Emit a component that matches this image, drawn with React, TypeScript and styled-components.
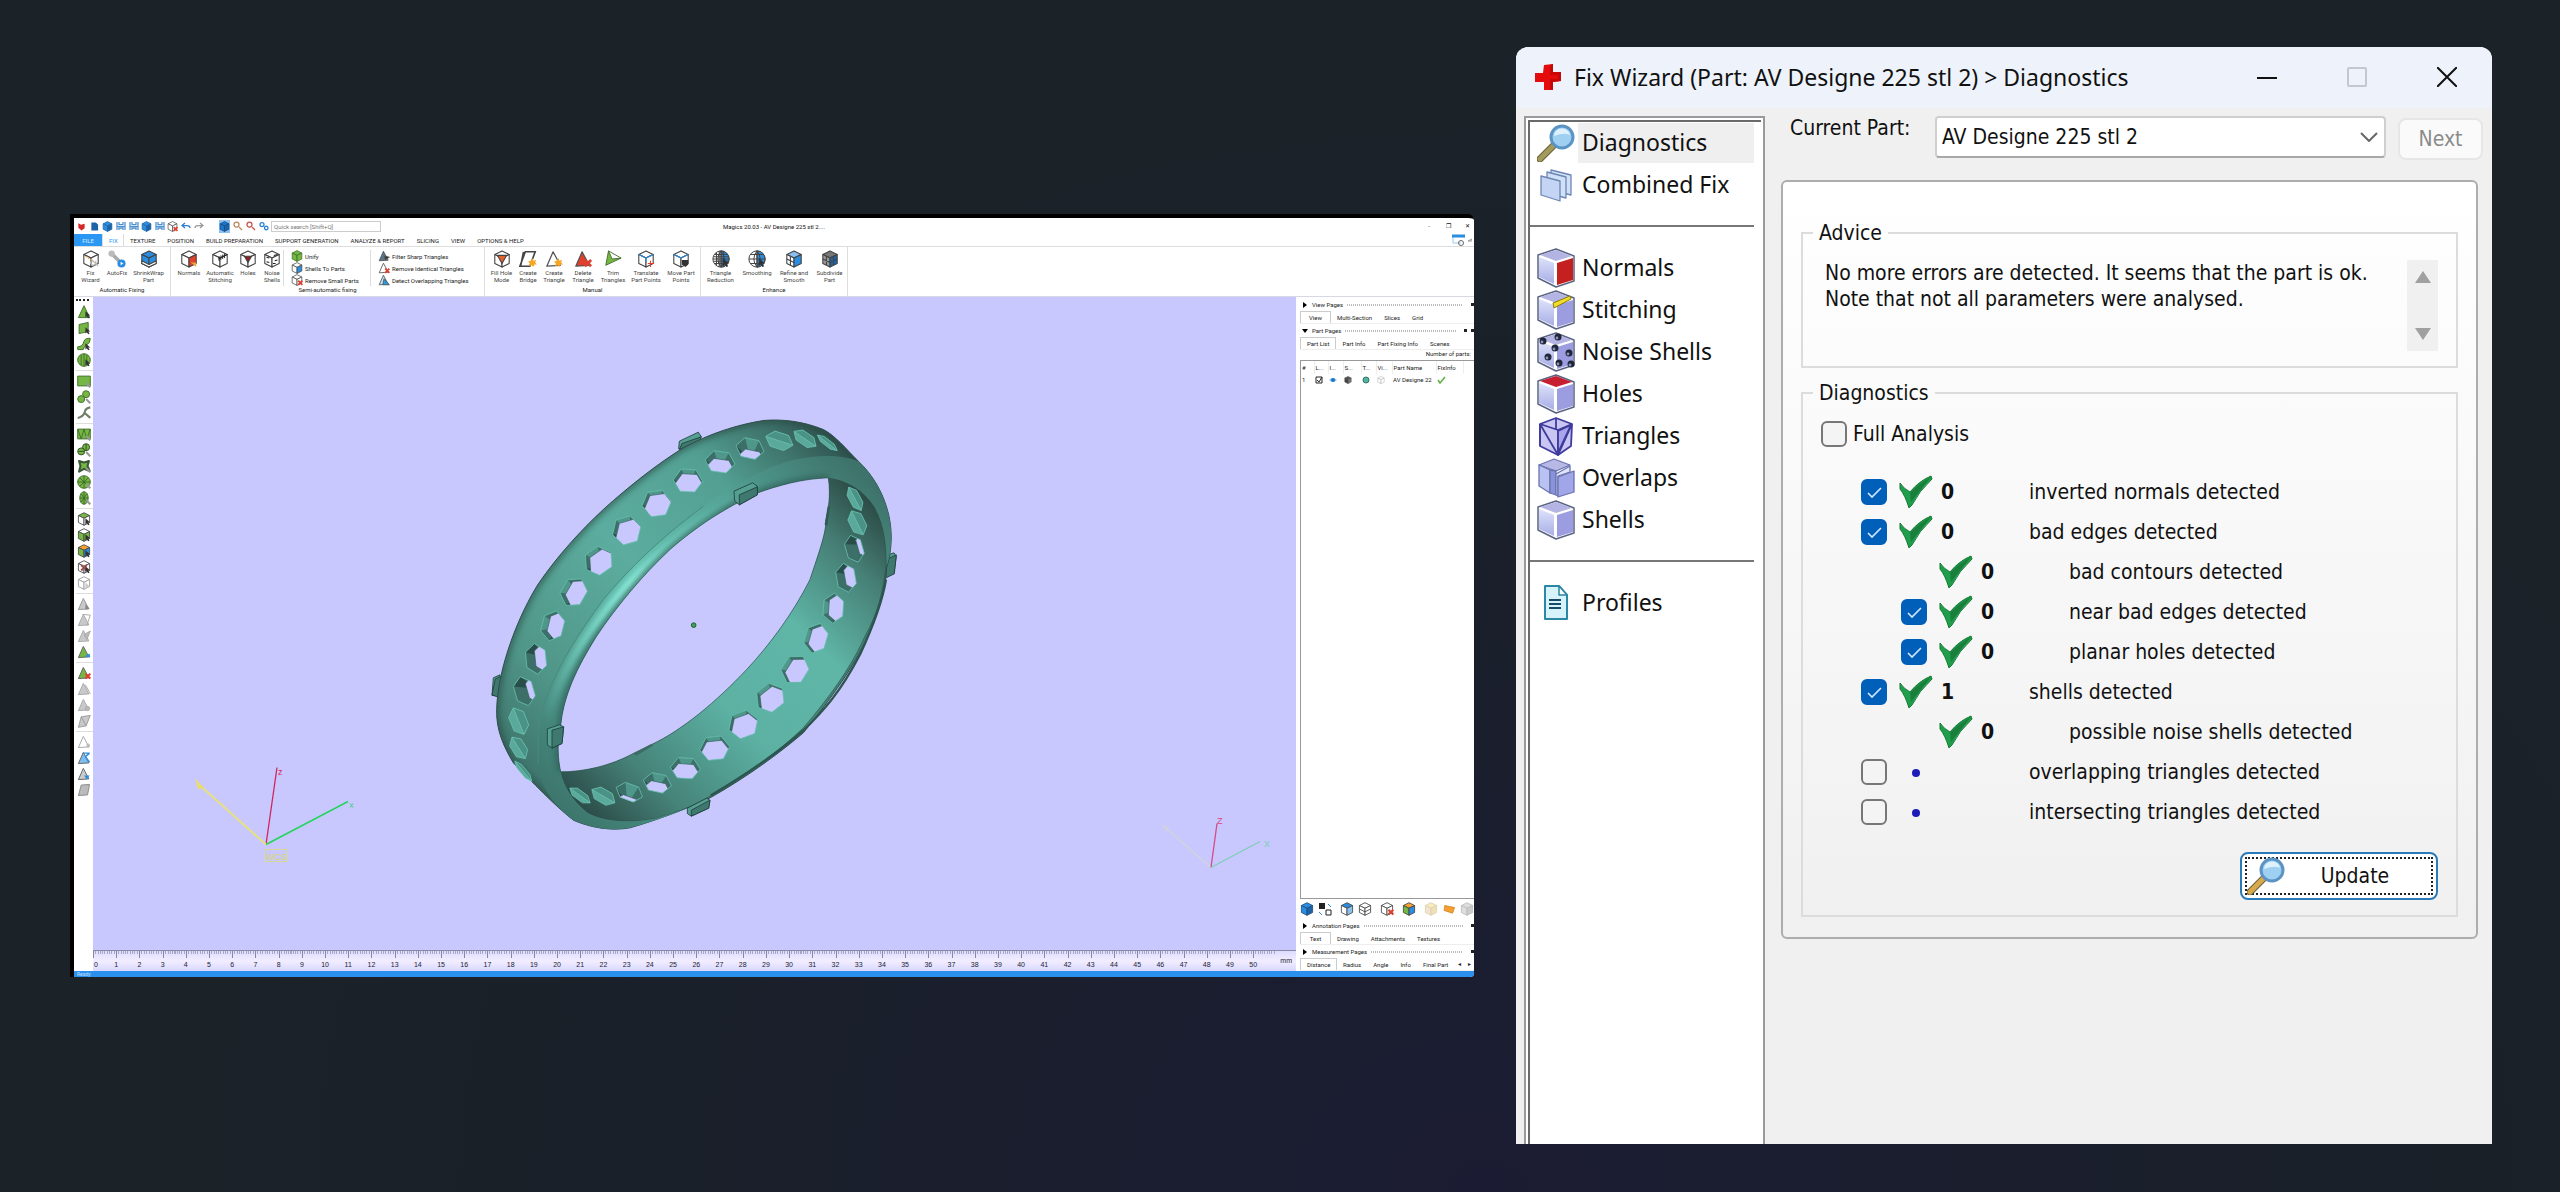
import React from "react";
import styled, { createGlobalStyle, css } from "styled-components";

const tiny = `Roboto, "Open Sans", sans-serif`;
const wizardTitle = `"Noto Sans", "Open Sans", sans-serif`;
const wizardBody = `"DejaVu Sans Condensed", "Noto Sans", sans-serif`;

const GlobalStyle = createGlobalStyle`
  * { box-sizing: border-box; }
  body { margin: 0; background: #1b2228; }
  button, input, select { font: inherit; color: inherit; margin: 0; }
  svg { display: block; flex: none; }
`;

const Page = styled.main`
  min-height: 100vh;
  display: grid;
  grid-template-columns: 1404fr 976fr;
  gap: 42px;
  align-items: start;
  padding: 0 68px 48px 70px;
  background: radial-gradient(ellipse 50% 90% at 58% 100%, #1b1c33 0%, #1a2029 70%, #1b2228 100%);
`;

/* ---------- shared icon drawings ---------- */

type CubeProps = { s?: number; t?: string; l?: string; r?: string; line?: string; children?: React.ReactNode };
const Cube = ({ s = 18, t = "#fff", l = "#fff", r = "#fff", line = "#444", children }: CubeProps) => (
  <svg width={s} height={s} viewBox="0 0 20 20" fill="none" stroke={line} strokeWidth="1.2" strokeLinejoin="round">
    <path d="M10 1L18 5L10 9L2 5Z" fill={t} />
    <path d="M2 5L10 9V19L2 15Z" fill={l} />
    <path d="M18 5V15L10 19V9Z" fill={r} />
    {children}
  </svg>
);
const Star = () => <path d="M15 9l1 3 3-1-1 3 2 2-3 0-1 3-2-2-3 1 1-3-2-2 3-1z" fill="#f5a623" stroke="none" />;
const Cursor = () => <path d="M12 9V18L14 16L16 19L18 18L16 15H19Z" fill="#333" stroke="none" />;
const RedX = () => <path d="M12 11L19 18M19 11L12 18" stroke="#dc4030" strokeWidth="3" />;
const Globe = ({ s = 18, dense = false }: { s?: number; dense?: boolean }) => (
  <svg width={s} height={s} viewBox="0 0 20 20" fill="none" stroke="#444" strokeWidth="1.1">
    <circle cx="10" cy="10" r="9" fill="#fff" />
    <path d="M10 1a9 9 0 0 1 0 18z" fill="#2b8de0" />
    <path d="M1 10H19M10 1V19M3 5H17M3 15H17M10 1Q3 10 10 19M10 1Q17 10 10 19" />
    {dense && <path d="M2 7.500H18M2 12.500H18M5 3V17M8 1V19M13 1V19" />}
    <Cursor />
  </svg>
);
type TriProps = { s?: number; fill?: string; line?: string; children?: React.ReactNode };
const Tri = ({ s = 18, fill = "#fff", line = "#555", children }: TriProps) => (
  <svg width={s} height={s} viewBox="0 0 20 20" fill="none" stroke={line} strokeWidth="1.4" strokeLinejoin="round">
    <path d="M9 2L17 17L2 18Z" fill={fill} />
    {children}
  </svg>
);

/* ---------- Magics window ---------- */

const MagicsWindow = styled.section`
  margin-top: 214px;
  min-height: calc(100vh - 429px);
  display: flex;
  flex-direction: column;
  min-width: 0;
  border: solid #000;
  border-width: 4px 0 0 4px;
  border-radius: 0 6px 4px 0;
  background: #fff;
  color: #222;
  overflow: hidden;
  font: 6px/7px ${tiny};
`;
const QuickBar = styled.header`
  height: 16px;
  display: grid;
  grid-template-columns: 1fr auto 1fr;
  align-items: center;
  color: #111;
`;
const QuickTools = styled.div`
  display: flex;
  align-items: center;
  gap: 2px;
  padding-left: 2px;
`;
const QuickGap = styled.i`
  width: 11px;
`;
const QuickButton = styled.button<{ $on?: boolean }>`
  width: 11px;
  height: 13px;
  padding: 0;
  border: 0;
  display: grid;
  place-items: center;
  background: ${(p) => (p.$on ? "#8cc0ee" : "transparent")};
`;
const Search = styled.input`
  width: 110px;
  height: 11px;
  padding: 0 2px;
  border: 1px solid #ccc;
  &::placeholder { color: #777; opacity: 1; }
`;
const Caption = styled.div`
  font-size: 6px;
`;
const WindowKeys = styled.div`
  display: flex;
  justify-content: flex-end;
  gap: 9px;
  padding-right: 2px;
`;
const PlainKey = styled.button`
  width: 10px;
  padding: 0;
  border: 0;
  background: none;
  line-height: 8px;
`;
const TabBar = styled.nav`
  height: 13px;
  display: flex;
  align-items: stretch;
  border-bottom: 1px solid #ddd;
  padding-right: 2px;
`;
const RibbonTab = styled.button<{ $kind?: "file" | "on" }>`
  padding: 0 6px;
  border: 0;
  background: none;
  color: #222;
  white-space: nowrap;
  ${(p) => p.$kind === "file" && css`width: 28px; background: #2b97f5; color: #d5eaff;`}
  ${(p) => p.$kind === "on" && css`width: 22px; border: solid #ddd; border-width: 0 1px; color: #2b97f5;`}
`;
const Spacer = styled.div`
  flex: 1;
`;
const Ribbon = styled.div`
  height: 50px;
  display: flex;
  border-bottom: 1px solid #d8d8e4;
`;
const Group = styled.div`
  display: flex;
  flex-direction: column;
  border-right: 1px solid #ddd;
  padding: 3px 1px 0;
`;
const GroupRow = styled.div`
  flex: 1;
  display: flex;
`;
const GroupName = styled.div`
  height: 10px;
  text-align: center;
`;
const Tool = styled.button<{ $w: number }>`
  width: ${(p) => p.$w}px;
  padding: 0;
  border: 0;
  background: none;
  display: flex;
  flex-direction: column;
  align-items: center;
  color: #444;
  white-space: pre;
  gap: 1px;
`;
const ToolList = styled.div<{ $w: number }>`
  width: ${(p) => p.$w}px;
  height: 36px;
  margin-left: 1px;
  padding-left: 7px;
  border-left: 1px solid #ddd;
`;
const ListTool = styled.button`
  height: 12px;
  padding: 0;
  border: 0;
  background: none;
  display: flex;
  align-items: center;
  gap: 2px;
  white-space: nowrap;
`;
const Work = styled.div`
  flex: 1;
  display: flex;
  min-height: 0;
`;
const SideTools = styled.div`
  width: 19px;
  padding: 2px 0 0 2px;
`;
const Grip = styled.div`
  width: 13px;
  height: 5px;
  border-top: 2px dotted #222;
`;
const ToolStack = styled.div`
  padding-bottom: 2px;
  margin-bottom: 2px;
  border-bottom: 1px solid #ddd;
  &:last-child { border: 0; }
`;
const StackButton = styled.button`
  width: 15px;
  height: 16px;
  padding: 0;
  border: 0;
  background: none;
  display: grid;
  place-items: center;
`;
const Stage = styled.div`
  flex: 1;
  min-width: 0;
  display: flex;
  flex-direction: column;
  background: #c8c8ff;
`;
const Scene = styled.svg`
  flex: 1 1 0;
  width: 100%;
  min-height: 300px;
`;
const Ruler = styled.div`
  height: 21px;
  display: flex;
  border-top: 1px solid #8888a4;
  background: linear-gradient(#dcdcff, #f2edff 50%, #d8d8ff);
  font: 7px/8px "Liberation Sans", sans-serif;
  color: #223;
  overflow: hidden;
`;
const RulerCell = styled.div`
  flex: 1;
  padding-top: 10px;
  background:
    linear-gradient(90deg, #8888a4 1px, transparent 1px) 0 0 / 100% 7px no-repeat,
    repeating-linear-gradient(90deg, #a8a8c4 0 1px, transparent 1px 10%) 0 0 / 100% 3px no-repeat;
`;
const RulerMark = styled.div`
  margin-left: -100%;
  text-align: center;
  ${RulerCell}:first-child & { margin-left: 1px; text-align: left; }
`;
const RulerUnit = styled.div`
  width: 20px;
  padding: 6px 0 0 4px;
`;
const SidePanel = styled.aside`
  width: 178px;
  padding: 1px 0 0 4px;
  display: flex;
  flex-direction: column;
`;
const PageHead = styled.div`
  height: 13px;
  display: flex;
  align-items: center;
  gap: 4px;
  padding-left: 2px;
`;
const Fold = styled.svg`
  width: 6px;
  height: 6px;
`;
const Dots = styled.div`
  flex: 1;
  height: 2px;
  background: repeating-linear-gradient(90deg, #bbb 0 1px, transparent 1px 2px);
  margin-right: 4px;
`;
const Pin = styled.div`
  width: 3px;
  height: 3px;
  background: #222;
`;
const PageTabs = styled.div`
  height: 13px;
  display: flex;
  border-bottom: 1px solid #eee;
`;
const PageTab = styled.button<{ $on?: boolean }>`
  padding: 0 6px;
  border: 0;
  background: none;
  white-space: nowrap;
  ${(p) => p.$on && css`min-width: 31px; border: 1px solid #ccc; border-bottom: 0;`}
`;
const PartCount = styled.div`
  text-align: right;
  padding: 0 3px 3px 0;
`;
const PartBox = styled.div`
  flex: 1;
  border: solid #999;
  border-width: 1px 0 1px 1px;
`;
const PartTable = styled.table`
  border-collapse: collapse;
  table-layout: fixed;
  width: 162px;
  th, td { padding: 0 1px; height: 11px; font-weight: 400; text-align: left; white-space: nowrap; overflow: hidden; }
  th { height: 13px; border-right: 1px solid #eee; }
`;
const PanelTools = styled.div`
  height: 20px;
  display: flex;
  align-items: center;
  gap: 4px;
`;
const Bar = styled.i`
  width: 1px;
  height: 14px;
  background: #999;
`;
const StatusBar = styled.footer`
  height: 6px;
  background: #2b8fee;
  color: #bfe0ff;
  font-size: 5px;
  line-height: 7px;
  padding-left: 3px;
  overflow: hidden;
`;

/* ring model */

const OUTER = "M80 930C83 800 150 640 205 553C262 470 330 395 400 330C480 258 560 195 640 145C720 102 800 76 880 63C940 58 1000 66 1060 90C1095 108 1125 145 1165 185C1210 228 1240 280 1256 345C1268 400 1266 450 1250 505C1248 570 1225 640 1190 720C1150 800 1090 890 1000 1000C900 1085 800 1150 720 1195C640 1232 560 1262 480 1285C430 1294 370 1288 310 1262C250 1215 190 1150 130 1090C100 1040 78 990 80 930Z";
const RIM_INNER = "M1075 235C1000 238 930 255 850 285C760 330 680 380 600 450C520 525 440 620 380 710C320 805 280 890 272 980C260 1030 264 1080 272 1117";
const HOLE = `${RIM_INNER}C340 1117 420 1100 490 1062L545 1035C640 990 740 905 830 810C900 735 970 640 1020 540C1050 450 1068 400 1068 360C1080 310 1080 270 1075 235Z`;
const INSIDE = "M1075 235C1080 270 1080 310 1068 360C1068 400 1050 450 1020 540C970 640 900 735 830 810C740 905 640 990 545 1035L490 1062C420 1100 340 1117 272 1117C282 1165 310 1205 350 1238C400 1268 480 1272 560 1256C640 1232 680 1215 720 1190C800 1150 900 1080 1000 985C1090 880 1150 790 1185 710C1225 640 1240 570 1248 500C1250 440 1245 380 1215 325C1180 270 1130 242 1075 235Z";
const RIM = `M1075 235C1000 238 930 255 850 285C760 330 680 380 600 450C520 525 440 620 380 710C320 805 280 890 272 980C260 1030 264 1080 272 1117C282 1165 310 1205 350 1238C400 1268 480 1272 560 1256L660 1224C600 1248 540 1268 480 1285C430 1294 370 1288 310 1262C250 1215 215 1170 205 1095C203 1020 205 960 230 890C270 790 320 710 400 600C500 480 600 395 700 320C780 265 880 205 960 184C1040 165 1110 165 1165 185C1210 228 1240 280 1256 345C1268 400 1266 450 1250 500C1250 440 1245 380 1215 325C1180 270 1130 242 1075 235Z`;

/* cx, cy, long radius, short radius, turn in degrees, opening shift x and y */
const CELLS: number[][] = [
  [1072, 130, 38, 10, 38, 90, 0], [1005, 118, 40, 19, 34, 90, 0], [928, 124, 43, 25, 18, 90, 0],
  [840, 147, 43, 30, 12, 2, 34], [750, 187, 45, 32, 8, 0, 23], [654, 243, 44, 35, 3, 3, 14],
  [560, 312, 44, 39, -8, 7, 10], [470, 393, 44, 41, -16, 10, 10], [386, 484, 45, 39, -35, 13, 8],
  [311, 578, 46, 36, -60, 16, 5], [248, 679, 46, 33, -76, 19, 1], [198, 778, 46, 31, 84, 27, -4],
  [163, 875, 45, 29, 74, 36, -8], [146, 965, 43, 25, 68, 90, 0], [146, 1045, 38, 21, 58, 90, 0],
  [160, 1115, 40, 9, 50, 90, 0],
  [1155, 298, 40, 17, 62, 90, 0], [1162, 370, 40, 23, 64, 90, 0], [1153, 448, 42, 26, 74, 34, -12],
  [1128, 535, 44, 29, 80, 24, -6], [1090, 626, 45, 31, -86, 16, 0], [1038, 716, 46, 33, -74, 13, 4],
  [975, 810, 46, 37, -58, 12, 8], [901, 895, 46, 39, -38, 10, 9], [820, 975, 46, 39, -20, 7, 10],
  [734, 1046, 45, 36, -6, 2, 13], [646, 1106, 45, 32, 4, 0, 18], [562, 1150, 43, 28, 12, -2, 24],
  [478, 1178, 42, 25, 20, -6, 37], [400, 1190, 40, 21, 30, 90, 0], [330, 1188, 38, 14, 36, 90, 0],
];

const hexPoints = (cx: number, cy: number, a: number, b: number, turn: number) => {
  const t = (turn * Math.PI) / 180;
  return [0, 60, 120, 180, 240, 300].map((deg) => {
    const r = (deg * Math.PI) / 180;
    const x = Math.cos(r) * a;
    const y = Math.sin(r) * b * 1.1;
    return [cx + x * Math.cos(t) - y * Math.sin(t), cy + x * Math.sin(t) + y * Math.cos(t)];
  });
};
const join = (pts: number[][]) => pts.map((p) => p.map((n) => n.toFixed(1)).join(",")).join(" ");

const Cell = ({ c, i }: { c: number[]; i: number }) => {
  const [cx, cy, a, b, turn, dx, dy] = c;
  const pts = hexPoints(cx, cy, a, b, turn);
  const closed = dx === 90;
  const id = `cell${i}`;
  return (
    <g>
      <clipPath id={id}><polygon points={join(pts)} /></clipPath>
      <polygon points={join(pts)} fill={closed ? "#5aa99b" : "#3b6f67"} />
      <g clipPath={`url(#${id})`}>
        {closed ? (
          <>
            <polygon points={join([pts[3], pts[4], pts[5], pts[0]])} fill="#4b9286" />
            <path d={`M${pts[3]}L${pts[0]}`} stroke="#6fcab8" strokeWidth="2" />
          </>
        ) : (
          <>
            <polygon points={join([pts[2], pts[3], [cx + dx, cy + dy]])} fill="#294d48" />
            <polygon points={join([pts[4], pts[5], [cx + dx, cy + dy]])} fill="#4f978a" />
            <polygon points={join(pts.map(([x, y]) => [x + dx, y + dy]))} fill="#c8c8ff" stroke="#33615b" strokeWidth="2" />
          </>
        )}
      </g>
      <polygon points={join(pts)} fill="none" stroke="#6cc6b5" strokeOpacity=".75" strokeWidth="3" strokeLinejoin="round" />
    </g>
  );
};

const Clip = ({ d, f }: { d: string; f: string }) => (
  <g stroke="#1e3f3b" strokeWidth="2.500" strokeLinejoin="round">
    <path d={d} fill="#559e92" />
    <path d={f} fill="#3f786f" />
  </g>
);

const RingScene = () => (
  <Scene viewBox="93 297 1203 654" preserveAspectRatio="xMidYMid slice" role="img" aria-label="Ring model">
    <defs>
      <linearGradient id="body" gradientUnits="userSpaceOnUse" x1="150" y1="1150" x2="1150" y2="130">
        <stop offset="0" stopColor="#3c7068" />
        <stop offset=".2" stopColor="#509688" />
        <stop offset=".5" stopColor="#5cad9f" />
        <stop offset=".75" stopColor="#53a093" />
        <stop offset=".9" stopColor="#3d7068" />
        <stop offset="1" stopColor="#2c4a47" />
      </linearGradient>
      <linearGradient id="rim" gradientUnits="userSpaceOnUse" x1="250" y1="1200" x2="1180" y2="230">
        <stop offset="0" stopColor="#3d766d" />
        <stop offset=".25" stopColor="#4f998c" />
        <stop offset=".5" stopColor="#62beae" />
        <stop offset=".75" stopColor="#54a396" />
        <stop offset="1" stopColor="#3e736b" />
      </linearGradient>
      <linearGradient id="shine" gradientUnits="userSpaceOnUse" x1="230" y1="980" x2="860" y2="240">
        <stop offset="0" stopColor="#7fe6d3" stopOpacity="0" />
        <stop offset=".5" stopColor="#9bffee" />
        <stop offset="1" stopColor="#7fe6d3" stopOpacity="0" />
      </linearGradient>
      <linearGradient id="inside" gradientUnits="userSpaceOnUse" x1="300" y1="1190" x2="1200" y2="270">
        <stop offset="0" stopColor="#2c4d49" />
        <stop offset=".16" stopColor="#468379" />
        <stop offset=".4" stopColor="#5cb1a3" />
        <stop offset=".65" stopColor="#5fb6a7" />
        <stop offset=".85" stopColor="#467f75" />
        <stop offset="1" stopColor="#294440" />
      </linearGradient>
      <filter id="soft" x="-10%" y="-10%" width="120%" height="120%"><feGaussianBlur stdDeviation="9" /></filter>
      <clipPath id="rimClip"><path d={RIM} /></clipPath>
      <clipPath id="bodyClip"><path d={OUTER} /></clipPath>
    </defs>
    <g transform="translate(470 400) scale(.33333)">
      <Clip d="M628 125L685 98L694 112L636 150L626 148Z" f="M636 132L694 112L690 122L628 150Z" />
      <Clip d="M70 835L90 826L92 890L66 888Z" f="M76 838L94 830L90 895L66 886Z" />
      <Clip d="M1240 470L1272 460L1279 470L1272 522L1240 536Z" f="M1250 480L1279 466L1273 523L1246 536Z" />
      <path d={OUTER} fill="url(#body)" />
      <g clipPath="url(#bodyClip)">
        <path d={OUTER} fill="none" stroke="#24433f" strokeOpacity=".8" strokeWidth="14" filter="url(#soft)" />
      </g>
      <path d={OUTER} fill="none" stroke="#2c4f4b" strokeWidth="3" />
      <path d={HOLE} fill="#c8c8ff" />
      <path d={INSIDE} fill="url(#inside)" stroke="#2c504b" strokeWidth="2" />
      <path d="M1248 540C1235 620 1200 700 1170 765C1110 880 1060 935 1000 993C900 1080 800 1142 722 1188" fill="none" stroke="#2d5550" strokeWidth="7" />
      <path d={RIM} fill="url(#rim)" />
      <g clipPath="url(#rimClip)">
        <path d="M205 1060C215 960 260 850 340 730C440 590 560 460 700 365C800 305 900 240 1010 205" fill="none" stroke="url(#shine)" strokeWidth="28" filter="url(#soft)" />
        <path d={RIM_INNER} fill="none" stroke="#2f6059" strokeWidth="16" filter="url(#soft)" />
      </g>
      <path d="M700 320C600 395 500 480 400 600C320 710 270 790 230 890C205 960 203 1020 205 1095" fill="none" stroke="#468b80" strokeWidth="3" />
      <path d={RIM_INNER} fill="none" stroke="#2c524d" strokeWidth="2" />
      {CELLS.map((c, i) => <Cell key={i} c={c} i={i} />)}
      <Clip d="M792 275L848 250L862 260L862 286L808 316L794 304Z" f="M808 286L862 262V286L808 316Z" />
      <Clip d="M232 988L268 976L281 982L276 1032L246 1046L232 1036Z" f="M246 992L281 982L276 1032L246 1046Z" />
      <Clip d="M652 1226L710 1196L720 1202L716 1226L664 1250L652 1242Z" f="M664 1232L720 1202L716 1226L664 1250Z" />
      <path d="M488 1063L545 1033L550 1038L500 1068Z" fill="#3c6d66" />
      <path d="M1073 320L1064 376L1072 378L1080 322Z" fill="#2f5a55" />
      <circle cx="671" cy="677" r="7" fill="#3aa05a" stroke="#24613a" strokeWidth="3" />
    </g>
    <g fill="none" strokeWidth="1.300">
      <path d="M266 845L277 768" stroke="#d0245c" />
      <path d="M266 845L348 802" stroke="#25d45e" strokeWidth="1.600" />
      <path d="M266 845L200 786" stroke="#e6e07e" strokeWidth="2" />
      <path d="M195 779L204 788L198 790Z" fill="#e6dc70" />
      <path d="M350 804l3 4m0-4l-3 4" stroke="#35d472" strokeWidth="1" />
      <path d="M265 850H287V862H265Z" stroke="#d9d69a" strokeWidth="1" />
      <path d="M1211 868L1163 826" stroke="#d4d4d8" />
      <path d="M1211 868L1217 824" stroke="#d64a86" />
      <path d="M1211 868L1260 842" stroke="#7ccfb4" />
    </g>
    <g fontFamily="Liberation Sans, sans-serif" fontSize="9">
      <text x="278" y="775" fill="#d0245c">z</text>
      <text x="266" y="860" fill="#d9d66a">WCS</text>
      <text x="1217" y="824" fill="#d64a86">Z</text>
      <text x="1264" y="847" fill="#7ccfb4">X</text>
      <text x="1163" y="832" fill="#d4d4d8">Y</text>
    </g>
  </Scene>
);

/* left tool column */

const G = "#74b843";
const GREY = "#c9c9c9";
const shape = (kids: React.ReactNode, line = "#3f6a2a") => (
  <svg width="14" height="14" viewBox="0 0 20 20" fill={G} stroke={line} strokeWidth="1.300" strokeLinejoin="round">{kids}</svg>
);
const pipette = <path d="M13 13L19 19" stroke="#999" strokeWidth="3" />;
const stacks: React.ReactNode[][] = [
  [
    shape(<><path d="M10 1L18 18L2 18Z" /><Cursor /></>),
    shape(<><path d="M3 5L16 2V15L3 18Z" /><Cursor /></>),
    shape(<><path d="M1 14Q8 14 10 6Q12 1 19 2Q19 9 14 11Q10 13 9 18H1Z" /><Cursor /></>),
    shape(<><circle cx="10" cy="10" r="9" /><path d="M6 3V17M10 1V19M14 3V17" fill="none" /><Cursor /></>),
  ],
  [
    shape(<><path d="M1 3H19V17H1Z" />{pipette}</>),
    shape(<><circle cx="13" cy="6" r="5" /><circle cx="6" cy="13" r="5" />{pipette}</>),
    shape(<path d="M1 17Q9 15 11 9Q12 3 19 2M11 10L19 17" fill="none" strokeWidth="3" />, "#6f7f68"),
  ],
  [
    shape(<><path d="M1 3H19V17H1Z" /><path d="M1 3L6 17L10 3L14 17L19 3" fill="none" />{pipette}</>),
    shape(<><circle cx="13" cy="6" r="5" /><circle cx="6" cy="12" r="5" /><path d="M2 12H10M13 1V11" fill="none" />{pipette}</>, "#2f4a24"),
    shape(<><path d="M3 3L10 5L17 3L15 10L18 17L10 14L3 18L5 10Z" strokeWidth="3" />{pipette}</>, "#3c5a38"),
    shape(<><circle cx="10" cy="10" r="9" /><path d="M1 10H19M10 1V19M4 4L16 16M16 4L4 16" fill="none" />{pipette}</>),
    shape(<><ellipse cx="10" cy="10" rx="6" ry="9" /><path d="M4 10H16M10 1V19M6 4L14 16M14 4L6 16" fill="none" />{pipette}</>),
  ],
  [
    <Cube s={14} t={G} ><Cursor /></Cube>,
    <Cube s={14} l={G} r={G}><Cursor /></Cube>,
    <Cube s={14} t="#f5a030" l={G} r="#2b8de0"><Cursor /></Cube>,
    <Cube s={14}><path d="M6 7L14 15M14 7L6 15" stroke="#a05050" strokeWidth="3" /><Cursor /></Cube>,
    <Cube s={14} line="#999"><path d="M12 9V18L18 15Z" fill="#ccc" stroke="none" /></Cube>,
  ],
  [
    <Tri s={14} fill={GREY} line="#999"><path d="M12 10V18L18 17Z" fill="#888" stroke="none" /></Tri>,
    <Tri s={14} fill={GREY} line="#aaa"><path d="M8 2L19 3L14 18" /></Tri>,
    <Tri s={14} fill={GREY} line="#aaa"><path d="M10 8L19 3L14 15Z" fill="#bbb" /></Tri>,
    <Tri s={14} fill={G} line="#666"><path d="M11 16L18 12L19 18Z" fill="#2b8de0" stroke="none" /></Tri>,
  ],
  [
    <Tri s={14} fill={G} line="#666"><RedX /></Tri>,
    <Tri s={14} fill={GREY} line="#aaa"><path d="M12 4L19 17" /></Tri>,
    <Tri s={14} fill={GREY} line="#aaa"><circle cx="15" cy="15" r="3" fill="#bbb" /></Tri>,
    shape(<path d="M6 4L19 2L13 17L2 19ZM6 4L13 17" fill={GREY} />, "#999"),
  ],
  [
    <Tri s={14} line="#aaa"><circle cx="16" cy="15" r="2" /></Tri>,
    <Tri s={14} fill="#7fbdf0" line="#666"><path d="M9 3H18M18 3L12 8L18 16" stroke="#2b8de0" strokeWidth="2" /></Tri>,
    <Tri s={14} fill="#ccc" line="#666"><path d="M10 12L18 12L14 18Z" fill="#2b8de0" stroke="none" /></Tri>,
    shape(<path d="M6 3L18 2L15 17L2 18Z" fill="#bbb" />, "#888"),
  ],
];

const MiniGlyph = ({ d, c = "#2b7fd0" }: { d: string; c?: string }) => (
  <svg width="10" height="10" viewBox="0 0 20 20" fill="none" stroke={c} strokeWidth="2.500"><path d={d} /></svg>
);
const FLOPPY = "M2 2V18M18 2V18M2 11H18M6 2V7H14V2M6 18V14H14V18";

const PanelHead = ({ name, open }: { name: string; open?: boolean }) => (
  <PageHead>
    <Fold viewBox="0 0 6 6"><path d={open ? "M0 1H6L3 5Z" : "M1 0V6L5 3Z"} fill="#000" /></Fold>
    <span>{name}</span>
    <Dots />
    {open && <Pin />}
    <Pin />
  </PageHead>
);
const PanelTabs = ({ names, children }: { names: string[]; children?: React.ReactNode }) => (
  <PageTabs>
    {names.map((n, i) => <PageTab key={n} $on={i === 0}>{n}</PageTab>)}
    {children}
  </PageTabs>
);

const tabs = ["TEXTURE", "POSITION", "BUILD PREPARATION", "SUPPORT GENERATION", "ANALYZE & REPORT", "SLICING", "VIEW", "OPTIONS & HELP"];

const Magics = () => (
  <MagicsWindow>
    <QuickBar>
      <QuickTools>
        <QuickButton aria-label="Magics"><svg width="9" height="9" viewBox="0 0 20 20"><path d="M3 3L9 6L17 4V14L10 19L3 13Z" fill="#d62828" /></svg></QuickButton>
        <QuickButton aria-label="New"><svg width="9" height="9" viewBox="0 0 20 20"><path d="M3 1H13L18 6V19H3Z" fill="#1d63a8" /></svg></QuickButton>
        <QuickButton aria-label="Open"><Cube s={11} t="#2b8de0" l="#2b8de0" r="#1d63a8" line="#1d63a8" /></QuickButton>
        <QuickButton aria-label="Save"><MiniGlyph d={FLOPPY} c="#4a90d0" /></QuickButton>
        <QuickButton aria-label="Save as"><MiniGlyph d={FLOPPY} c="#4a90d0" /></QuickButton>
        <QuickButton aria-label="Load part"><Cube s={11} t="#2b8de0" l="#2b8de0" r="#1d63a8" line="#1d63a8" /></QuickButton>
        <QuickButton aria-label="Save part"><MiniGlyph d={FLOPPY} c="#4a90d0" /></QuickButton>
        <QuickButton aria-label="Unload"><Cube s={11}><RedX /></Cube></QuickButton>
        <QuickButton aria-label="Undo"><MiniGlyph d="M8 4L2 9L8 14M2 9H12Q18 9 18 14" /></QuickButton>
        <QuickButton aria-label="Redo"><MiniGlyph d="M12 4L18 9L12 14M18 9H8Q2 9 2 14" c="#999" /></QuickButton>
        <QuickGap />
        <QuickButton aria-label="Shade" $on><Cube s={11} t="#1d75c8" l="#1d75c8" r="#1d63a8" line="#124a80" /></QuickButton>
        <QuickButton aria-label="Zoom"><MiniGlyph d="M12 12L18 18M2 7a5 5 0 1 0 10 0a5 5 0 1 0 -10 0" c="#b98a5a" /></QuickButton>
        <QuickButton aria-label="Zoom out"><MiniGlyph d="M12 12L18 18M2 7a5 5 0 1 0 10 0a5 5 0 1 0 -10 0" c="#c9534a" /></QuickButton>
        <QuickButton aria-label="Settings"><MiniGlyph d="M2 7a4 4 0 1 0 8 0a4 4 0 1 0 -8 0M11 14a3 3 0 1 0 7 0a3 3 0 1 0 -7 0" /></QuickButton>
        <Search aria-label="Quick search" placeholder="Quick search [Shift+Q]" />
      </QuickTools>
      <Caption>Magics 20.03 - AV Designe 225 stl 2....</Caption>
      <WindowKeys>
        <PlainKey aria-label="Minimize">-</PlainKey>
        <PlainKey aria-label="Restore">❐</PlainKey>
        <PlainKey aria-label="Close">✕</PlainKey>
      </WindowKeys>
    </QuickBar>
    <TabBar>
      <RibbonTab $kind="file">FILE</RibbonTab>
      <RibbonTab $kind="on">FIX</RibbonTab>
      {tabs.map((t) => <RibbonTab key={t}>{t}</RibbonTab>)}
      <Spacer />
      <svg width="20" height="12" viewBox="0 0 20 12" fill="none"><path d="M1 2V9H9M12 4V2" stroke="#9cc8ee" /><path d="M0 2H13" stroke="#2b8de0" strokeWidth="3" /><circle cx="9" cy="9" r="2.500" stroke="#666" /><path d="M16 7L20 5V7Z" stroke="#999" /></svg>
    </TabBar>
    <Ribbon>
      <Group>
        <GroupRow>
          <Tool $w={31}><Cube><path d="M4 7L16 15" stroke="#e0a050" strokeDasharray="2 1" /><path d="M11 11L18 18M10 12a3 3 0 1 0 5 0" stroke="#bbb" /></Cube>{"Fix\nWizard"}</Tool>
          <Tool $w={22}><svg width="18" height="18" viewBox="0 0 20 20"><path d="M3 3L14 14" stroke="#aaa" strokeWidth="4" /><circle cx="4" cy="4" r="3.500" fill="#bbb" /><circle cx="15" cy="15" r="4.500" fill="#2b8de0" /><path d="M14 13L17 15L14 17Z" fill="#fff" /></svg>AutoFix</Tool>
          <Tool $w={41}><Cube t="#2b8de0" l="#2b8de0" r="#2b8de0"><path d="M2 12L10 16L18 12V15L10 19L2 15Z" fill="#fff" /></Cube>{"ShrinkWrap\nPart"}</Tool>
        </GroupRow>
        <GroupName>Automatic Fixing</GroupName>
      </Group>
      <Group>
        <GroupRow>
          <Tool $w={34}><Cube r="#e2402c"><path d="M12 14L18 14L18 19Z" fill="#e9a43c" stroke="none" /></Cube>Normals</Tool>
          <Tool $w={28}><Cube><path d="M8 10L18 5M9 7v5m2-6v5m2-6v5m2-6v5" stroke="#222" strokeWidth="1" /></Cube>{"Automatic\nStitching"}</Tool>
          <Tool $w={28}><Cube><path d="M6 7H14L10 14Z" fill="#8f1f1f" /></Cube>Holes</Tool>
          <Tool $w={20}><Cube><path d="M4 8l3 1m-3 4l3 1m5-8l4-1m-3 7l3-1m-5 4l3 0" stroke="#222" /></Cube>{"Noise\nShells"}</Tool>
          <ToolList $w={86}>
            <ListTool><Cube s={12} t={G} l={G} r={G} line="#3f6a2a" />Unify</ListTool>
            <ListTool><Cube s={12} r="#2b8de0" />Shells To Parts</ListTool>
            <ListTool><Cube s={12}><RedX /></Cube>Remove Small Parts</ListTool>
          </ToolList>
          <ToolList $w={113}>
            <ListTool><Tri s={12} fill="#5a7488"><path d="M11 10L19 12L12 16Z" fill="#333" /></Tri>Filter Sharp Triangles</ListTool>
            <ListTool><Tri s={12}><RedX /></Tri>Remove Identical Triangles</ListTool>
            <ListTool><Tri s={12} fill="#bfe4ff"><path d="M10 8L19 18H8Z" fill="#2b9be0" /></Tri>Detect Overlapping Triangles</ListTool>
          </ToolList>
        </GroupRow>
        <GroupName>Semi-automatic fixing</GroupName>
      </Group>
      <Group>
        <GroupRow>
          <Tool $w={31}><Cube><path d="M5 6L15 6L10 15Z" fill="#e2602c" /></Cube>{"Fill Hole\nMode"}</Tool>
          <Tool $w={22}><svg width="18" height="18" viewBox="0 0 20 20" fill="none" stroke="#444" strokeWidth="1.800"><path d="M7 2H18L12 18H1ZM5 2L2 17" /><Star /></svg>{"Create\nBridge"}</Tool>
          <Tool $w={30}><Tri><Star /></Tri>{"Create\nTriangle"}</Tool>
          <Tool $w={28}><Tri fill="#e2402c"><RedX /></Tri>{"Delete\nTriangle"}</Tool>
          <Tool $w={32}><svg width="18" height="18" viewBox="0 0 20 20" fill={G} stroke="#3f6a2a"><path d="M5 1L19 9L2 17ZM5 1L9 10L19 9" /></svg>{"Trim\nTriangles"}</Tool>
          <Tool $w={34}><Cube><path d="M2 5L10 9V14M10 9L18 5" stroke="#2b8de0" /><path d="M12 15H19M15 12V19" stroke="#e2402c" /></Cube>{"Translate\nPart Points"}</Tool>
          <Tool $w={36}><Cube><path d="M2 5L10 9L18 5" stroke="#2b8de0" /><path d="M11 11H18V16L15 19L11 16Z" fill="#333" stroke="none" /></Cube>{"Move Part\nPoints"}</Tool>
        </GroupRow>
        <GroupName>Manual</GroupName>
      </Group>
      <Group>
        <GroupRow>
          <Tool $w={37}><Globe dense />{"Triangle\nReduction"}</Tool>
          <Tool $w={36}><Globe />Smoothing</Tool>
          <Tool $w={38}><Cube r="#2b8de0" t="#8cc0ee"><path d="M2 10L10 14M6 7V17" /></Cube>{"Refine and\nSmooth"}</Tool>
          <Tool $w={33}><Cube t="#777" l="#999" r="#1d63a8"><path d="M2 10L10 14L18 10M6 7V17M14 7V17" /></Cube>{"Subdivide\nPart"}</Tool>
        </GroupRow>
        <GroupName>Enhance</GroupName>
      </Group>
    </Ribbon>
    <Work>
      <SideTools>
        <Grip />
        {stacks.map((s, i) => (
          <ToolStack key={i}>{s.map((icon, k) => <StackButton key={k} aria-label={`Tool ${i + 1}.${k + 1}`}>{icon}</StackButton>)}</ToolStack>
        ))}
      </SideTools>
      <Stage>
        <RingScene />
        <Ruler>
          {Array.from({ length: 51 }, (_, n) => <RulerCell key={n}><RulerMark>{n}</RulerMark></RulerCell>)}
          <RulerUnit>mm</RulerUnit>
        </Ruler>
      </Stage>
      <SidePanel>
        <PanelHead name="View Pages" />
        <PanelTabs names={["View", "Multi-Section", "Slices", "Grid"]} />
        <PanelHead name="Part Pages" open />
        <PanelTabs names={["Part List", "Part Info", "Part Fixing Info", "Scenes"]} />
        <PartCount>Number of parts:</PartCount>
        <PartBox>
          <PartTable>
            <colgroup><col width="13" /><col width="14" /><col width="15" /><col width="18" /><col width="15" /><col width="16" /><col width="44" /><col width="27" /></colgroup>
            <thead><tr><th>#</th><th>L...</th><th>I...</th><th>S...</th><th>T...</th><th>Vi...</th><th>Part Name</th><th>FixInfo</th></tr></thead>
            <tbody><tr>
              <td>1</td>
              <td><svg width="8" height="8" viewBox="0 0 8 8" fill="none" stroke="#222"><path d="M1 1H7V7H1ZM2 4L4 6L7 1" /></svg></td>
              <td><svg width="8" height="8" viewBox="0 0 8 8"><path d="M0 4Q4 0 8 4Q4 8 0 4" fill="#8cc4f5" /><circle cx="4" cy="4" r="2" fill="#1d75c8" /></svg></td>
              <td><Cube s={8} t="#555" l="#444" r="#777" /></td>
              <td><svg width="8" height="8" viewBox="0 0 8 8"><circle cx="4" cy="4" r="3" fill="#58b0a0" stroke="#2c7a6c" /></svg></td>
              <td><Cube s={8} line="#aaa" /></td>
              <td>AV Designe 22</td>
              <td><svg width="9" height="8" viewBox="0 0 9 8" fill="none" stroke="#5cb040" strokeWidth="1.500"><path d="M1 4L3 7L8 1" /></svg></td>
            </tr></tbody>
          </PartTable>
        </PartBox>
        <PanelTools>
          <Cube s={14} t="#2b8de0" l="#2b8de0" r="#1d63a8" line="#1d4f80" />
          <svg width="14" height="14" viewBox="0 0 14 14"><path d="M1 1H7V7H1Z" fill="#222" /><path d="M8 8H13V13H8Z" fill="none" stroke="#222" /><path d="M10 2L13 5M1 10L4 13" stroke="#2b8de0" /></svg>
          <Bar />
          <Cube s={14} t="#2b8de0" r="#8cc0ee" />
          <Cube s={14}><path d="M2 10L10 14L18 10" /></Cube>
          <Bar />
          <Cube s={14}><RedX /></Cube>
          <Bar />
          <Cube s={14} t="#f5a030" l={G} r="#2b8de0" />
          <Bar />
          <Cube s={14} t="#f6ecc0" l="#f3e4d0" r="#f0e0b8" line="#ddd0b0" />
          <svg width="14" height="14" viewBox="0 0 20 20"><path d="M4 5L18 8L15 16L3 12Z" fill="#f5a030" stroke="#c87810" /></svg>
          <Cube s={14} t="#ddd" l="#ddd" r="#ccc" line="#bbb" />
        </PanelTools>
        <PanelHead name="Annotation Pages" />
        <PanelTabs names={["Text", "Drawing", "Attachments", "Textures"]} />
        <PanelHead name="Measurement Pages" />
        <PanelTabs names={["Distance", "Radius", "Angle", "Info", "Final Part"]}>
          <Spacer />
          <PlainKey aria-label="Scroll tabs left">◂</PlainKey>
          <PlainKey aria-label="Scroll tabs right">▸</PlainKey>
        </PanelTabs>
      </SidePanel>
    </Work>
    <StatusBar>Ready</StatusBar>
  </MagicsWindow>
);

/* ---------- Fix Wizard window ---------- */

const Wizard = styled.section`
  margin-top: 47px;
  min-height: calc(100vh - 95px);
  display: flex;
  flex-direction: column;
  min-width: 0;
  border-radius: 12px 12px 0 0;
  background: #f0f0f0;
  color: #111;
  overflow: hidden;
  font: 21px/26px ${wizardBody};
`;
const TitleBar = styled.header`
  height: 61px;
  display: flex;
  align-items: center;
  gap: 12px;
  padding: 0 0 2px 18px;
  background: #eef3fb;
  font: 23px/30px ${wizardTitle};
`;
const Title = styled.h1`
  flex: 1;
  margin: 0;
  font: inherit;
  white-space: nowrap;
`;
const CaptionKeys = styled.div`
  display: flex;
`;
const CaptionKey = styled.button`
  width: 90px;
  height: 58px;
  border: 0;
  background: none;
  display: grid;
  place-items: center;
`;
const Body = styled.div`
  flex: 1;
  display: flex;
  padding: 8px 0 0 8px;
`;
const Sidebar = styled.nav`
  width: 241px;
  display: flex;
  border: solid #9a9a9e;
  border-width: 2px 2px 0;
  padding: 2px 2px 0;
  background: #fff;
  font: 23px/30px ${wizardTitle};
`;
const SidebarInner = styled.div`
  flex: 1;
  border: solid #6a6a6a;
  border-width: 2px 0 0 2px;
`;
const NavItem = styled.button`
  width: 100%;
  height: 42px;
  padding: 0 7px 0 6px;
  border: 0;
  background: none;
  display: flex;
  align-items: center;
  gap: 2px;
`;
const NavIcon = styled.span`
  width: 40px;
  display: grid;
  place-items: center;
`;
const NavText = styled.span<{ $on?: boolean }>`
  flex: 1;
  height: 40px;
  padding-left: 4px;
  text-align: left;
  line-height: 38px;
  background: ${(p) => (p.$on ? "#efefef" : "none")};
`;
const NavRule = styled.hr`
  height: 2px;
  margin: 19px 7px 20px 0;
  border: 0;
  background: #777;
`;
const Content = styled.div`
  flex: 1;
  padding: 0 14px 0 16px;
`;
const PartRow = styled.div`
  display: flex;
  align-items: flex-start;
  height: 64px;
  padding-left: 9px;
  margin-right: -5px;
`;
const PartLabel = styled.label`
  width: 145px;
  line-height: 24px;
`;
const SelectWrap = styled.div`
  flex: 1;
  display: grid;
  align-items: center;
  > * { grid-area: 1 / 1; }
  > svg { justify-self: end; margin-right: 8px; pointer-events: none; }
`;
const PartSelect = styled.select`
  appearance: none;
  width: 100%;
  height: 42px;
  padding: 0 5px;
  border: 2px solid #cfcfcf;
  border-bottom-color: #a8a8a8;
  border-radius: 4px;
  background: #fff;
`;
const NextButton = styled.button`
  width: 85px;
  height: 42px;
  margin: 2px 0 0 12px;
  border: 2px solid #e6e6e6;
  border-radius: 8px;
  background: #fafafa;
  &:disabled { color: #8a8a8a; }
`;
const Panel = styled.div`
  border: 2px solid #adadad;
  border-radius: 6px;
  padding: 38px 18px 20px;
  background: linear-gradient(#fff, #f0f0f0);
`;
const Box = styled.fieldset<{ $top: number }>`
  min-width: 0;
  margin: 0 0 12px;
  border: 2px solid #dcdcdc;
  padding: ${(p) => p.$top}px 18px 15px;
  &:last-child { margin: 0; }
`;
const BoxName = styled.legend`
  margin-left: -8px;
  padding: 0 6px;
`;
const AdviceRow = styled.div`
  display: flex;
  justify-content: space-between;
`;
const AdviceText = styled.p`
  margin: 0;
  padding-left: 4px;
`;
const Scroller = styled.div`
  width: 31px;
  height: 91px;
  display: flex;
  flex-direction: column;
  justify-content: space-between;
  background: #f0f0f0;
`;
const ScrollKey = styled.button`
  height: 34px;
  border: 0;
  padding: 0;
  background: none;
  display: grid;
  place-items: center;
`;
const Tick = styled.span`
  width: 26px;
  height: 26px;
  display: grid;
  > * { grid-area: 1 / 1; }
  > svg { pointer-events: none; }
`;
const TickInput = styled.input`
  appearance: none;
  width: 26px;
  height: 26px;
  border: 2px solid #777;
  border-radius: 6px;
  background: #f4f4f4;
  &:checked { border-color: #005fb8; background: #005fb8; }
`;
const FullRow = styled.label`
  display: flex;
  align-items: center;
  gap: 6px;
  margin-bottom: 25px;
`;
const Check = styled.label<{ $deep?: boolean }>`
  height: 40px;
  display: grid;
  grid-template-columns: 38px 42px 88px 1fr;
  align-items: center;
  padding-left: ${(p) => (p.$deep ? 80 : 40)}px;
  white-space: nowrap;
`;
const Count = styled.b`
  line-height: 26px;
`;
const Foot = styled.div`
  display: flex;
  justify-content: flex-end;
  margin-top: 20px;
`;
const Update = styled.button`
  width: 198px;
  height: 48px;
  padding: 3px;
  border: 2px solid #2a7ab8;
  border-radius: 8px;
  background: #fff;
`;
const UpdateFace = styled.span`
  height: 100%;
  display: flex;
  align-items: center;
  border: 2px dotted #222;
`;
const UpdateText = styled.span`
  flex: 1;
  text-align: center;
  padding-right: 6px;
`;

const Magnifier = ({ handle = "#a39a5c" }: { handle?: string }) => (
  <svg width="38" height="38" viewBox="0 0 38 38" fill="none">
    <path d="M3 35L17 21" stroke="#66603a" strokeWidth="7" strokeLinecap="round" />
    <path d="M3 35L17 21" stroke={handle} strokeWidth="5" strokeLinecap="round" />
    <circle cx="25" cy="13" r="11" fill="#9fd0f2" stroke="#5b93c4" strokeWidth="3" />
    <path d="M17 12a8 7 0 0 1 16-1q-6-3-16 1Z" fill="#dff1fd" />
  </svg>
);

const Block = ({ top = "#b4b4e4", right = "#9c9ce0", left = "url(#face)", children }: { top?: string; right?: string; left?: string; children?: React.ReactNode }) => (
  <svg width="40" height="40" viewBox="0 0 40 40" fill="none" strokeLinejoin="round">
    <defs>
      <linearGradient id="face" x2="0" y2="1"><stop offset="0" stopColor="#dde2fa" /><stop offset="1" stopColor="#a8aee6" /></linearGradient>
    </defs>
    <path d="M2 7L20 1L38 8V33L20 39L2 30Z" fill="#fff" stroke="#5a6480" strokeWidth="1.500" />
    <path d="M4 7L20 2L36 8L20 13Z" fill={top} />
    <path d="M3 9L18 15V36L3 29Z" fill={left} />
    <path d="M21 15L37 10V32L21 37Z" fill={right} />
    {children}
  </svg>
);
const Dot = ({ x, y }: { x: number; y: number }) => (
  <g><circle cx={x} cy={y} r="3.500" fill="#20263a" /><circle cx={x - 1} cy={y + 1} r="1.400" fill="#8a94b8" /></g>
);

const navIcons: Record<string, React.ReactNode> = {
  Diagnostics: <Magnifier />,
  "Combined Fix": (
    <svg width="34" height="34" viewBox="0 0 34 34" fill="#cfe0f7" stroke="#6d86b4" strokeWidth="1.300" strokeLinejoin="round">
      <path d="M12 2L32 7V27L12 22Z" /><path d="M8 4L27 9V30L8 25Z" /><path d="M2 8L21 13V33L2 27Z" fill="#c4d4f4" />
    </svg>
  ),
  Normals: <Block right="#c42020" />,
  Stitching: <Block><path d="M17 13L34 6L35 9L18 18Z" fill="#f2dc28" stroke="#8a7c10" /></Block>,
  "Noise Shells": <Block>{[[7, 9], [22, 5], [19, 16], [12, 25], [33, 21], [23, 31], [35, 32]].map(([x, y]) => <Dot key={x} x={x} y={y} />)}</Block>,
  Holes: <Block top="#c81e32" />,
  Triangles: (
    <svg width="40" height="40" viewBox="0 0 40 40" fill="none" stroke="#3f3c9c" strokeWidth="1.800" strokeLinejoin="round">
      <path d="M4 8L20 2L36 8L35 30L22 39L4 30Z" fill="#c9c6f4" />
      <path d="M4 8L22 14L36 8M22 14V39M4 8L22 39L36 8M20 2V13M4 30L4 8" />
      <path d="M22 15L35 9L22 37Z" fill="#a9a4ec" />
    </svg>
  ),
  Overlaps: (
    <svg width="40" height="40" viewBox="0 0 40 40" stroke="#6a74b0" strokeWidth="1.300" strokeLinejoin="round">
      <path d="M3 7L18 1L34 7L20 13Z" fill="#b8b8e6" />
      <path d="M3 7L14 12V35L3 28Z" fill="#b9c2f0" />
      <path d="M14 12L20 13V37L14 35Z" fill="#8a92da" />
      <path d="M20 16L34 8V14L22 18V38L20 37Z" fill="#dfe4fb" />
      <path d="M22 19L38 13V34L22 39Z" fill="#a0a6e8" />
    </svg>
  ),
  Shells: <Block />,
  Profiles: (
    <svg width="26" height="36" viewBox="0 0 26 36" strokeLinejoin="round">
      <path d="M2 1H16L24 10V34H2Z" fill="#d6f3fb" stroke="#2c87a4" strokeWidth="2" />
      <path d="M16 1V10H24Z" fill="#fff" stroke="#2c87a4" strokeWidth="1.500" />
      <path d="M6 15H18M6 19H18M6 23H18" stroke="#174a66" strokeWidth="2" />
    </svg>
  ),
};

const Nav = ({ name, on }: { name: string; on?: boolean }) => (
  <NavItem><NavIcon>{navIcons[name]}</NavIcon><NavText $on={on}>{name}</NavText></NavItem>
);

const GreenTick = () => (
  <svg width="34" height="34" viewBox="0 0 34 34"><path d="M1 8Q5 14 11 17Q20 6 32 1L33 4Q20 16 13 30L10 33Q6 20 1 14Z" fill="#1f9e4c" stroke="#167a38" /><path d="M11 18Q20 8 32 2L12 27Z" fill="#1a7f3c" /></svg>
);
const TickBox = ({ on }: { on: boolean }) => (
  <Tick>
    <TickInput type="checkbox" defaultChecked={on} />
    {on && <svg width="26" height="26" viewBox="0 0 26 26" fill="none" stroke="#cfe6ff" strokeWidth="1.700"><path d="M7 14L11 18L20 9" /></svg>}
  </Tick>
);

type CheckRow = { text: string; count?: string; box?: boolean; on?: boolean; deep?: boolean };
const checks: CheckRow[] = [
  { text: "inverted normals detected", count: "0", box: true, on: true },
  { text: "bad edges detected", count: "0", box: true, on: true },
  { text: "bad contours detected", count: "0", deep: true },
  { text: "near bad edges detected", count: "0", box: true, on: true, deep: true },
  { text: "planar holes detected", count: "0", box: true, on: true, deep: true },
  { text: "shells detected", count: "1", box: true, on: true },
  { text: "possible noise shells detected", count: "0", deep: true },
  { text: "overlapping triangles detected", box: true },
  { text: "intersecting triangles detected", box: true },
];

const FixWizard = () => (
  <Wizard>
    <TitleBar>
      <svg width="28" height="28" viewBox="0 0 28 28"><path d="M10 2L19 1V9H27V18L19 19V27H10V19H1V10H9Z" fill="#e30b0b" /><path d="M19 1V9H27V18L19 19V27H16V16H24V12H16V2Z" fill="#c80808" /></svg>
      <Title>{"Fix Wizard (Part: AV Designe 225 stl 2) > Diagnostics"}</Title>
      <CaptionKeys>
        <CaptionKey aria-label="Minimize"><svg width="20" height="20" stroke="#111" strokeWidth="2"><path d="M0 11H20" /></svg></CaptionKey>
        <CaptionKey aria-label="Maximize" disabled><svg width="20" height="20" fill="none" stroke="#c3c7d0" strokeWidth="2"><rect x="1" y="1" width="18" height="18" rx="1" /></svg></CaptionKey>
        <CaptionKey aria-label="Close"><svg width="20" height="20" stroke="#111" strokeWidth="2"><path d="M0 0L20 20M20 0L0 20" /></svg></CaptionKey>
      </CaptionKeys>
    </TitleBar>
    <Body>
      <Sidebar>
        <SidebarInner>
          <Nav name="Diagnostics" on />
          <Nav name="Combined Fix" />
          <NavRule />
          {["Normals", "Stitching", "Noise Shells", "Holes", "Triangles", "Overlaps", "Shells"].map((n) => <Nav key={n} name={n} />)}
          <NavRule />
          <Nav name="Profiles" />
        </SidebarInner>
      </Sidebar>
      <Content>
        <PartRow>
          <PartLabel htmlFor="part">Current Part:</PartLabel>
          <SelectWrap>
            <PartSelect id="part"><option>AV Designe 225 stl 2</option></PartSelect>
            <svg width="18" height="10" viewBox="0 0 18 10" fill="none" stroke="#666" strokeWidth="2"><path d="M1 1L9 9L17 1" /></svg>
          </SelectWrap>
          <NextButton disabled>Next</NextButton>
        </PartRow>
        <Panel>
          <Box $top={14}>
            <BoxName>Advice</BoxName>
            <AdviceRow>
              <AdviceText>
                No more errors are detected. It seems that the part is ok.<br />
                Note that not all parameters were analysed.
              </AdviceText>
              <Scroller>
                <ScrollKey aria-label="Scroll up"><svg width="16" height="12"><path d="M8 0L16 12H0Z" fill="#a0a0a0" /></svg></ScrollKey>
                <ScrollKey aria-label="Scroll down"><svg width="16" height="12"><path d="M0 0H16L8 12Z" fill="#a0a0a0" /></svg></ScrollKey>
              </Scroller>
            </AdviceRow>
          </Box>
          <Box $top={15}>
            <BoxName>Diagnostics</BoxName>
            <FullRow><TickBox on={false} />Full Analysis</FullRow>
            {checks.map((c) => (
              <Check key={c.text} $deep={c.deep} as={c.box ? "label" : "div"}>
                {c.box ? <TickBox on={!!c.on} /> : <span />}
                {c.count ? <GreenTick /> : <svg width="34" height="34"><circle cx="17" cy="18" r="4" fill="#1c1cb8" /></svg>}
                <Count>{c.count}</Count>
                <span>{c.text}</span>
              </Check>
            ))}
            <Foot>
              <Update><UpdateFace><Magnifier handle="#d8a84a" /><UpdateText>Update</UpdateText></UpdateFace></Update>
            </Foot>
          </Box>
        </Panel>
      </Content>
    </Body>
  </Wizard>
);

export default function App() {
  return (
    <>
      <GlobalStyle />
      <Page>
        <Magics />
        <FixWizard />
      </Page>
    </>
  );
}
